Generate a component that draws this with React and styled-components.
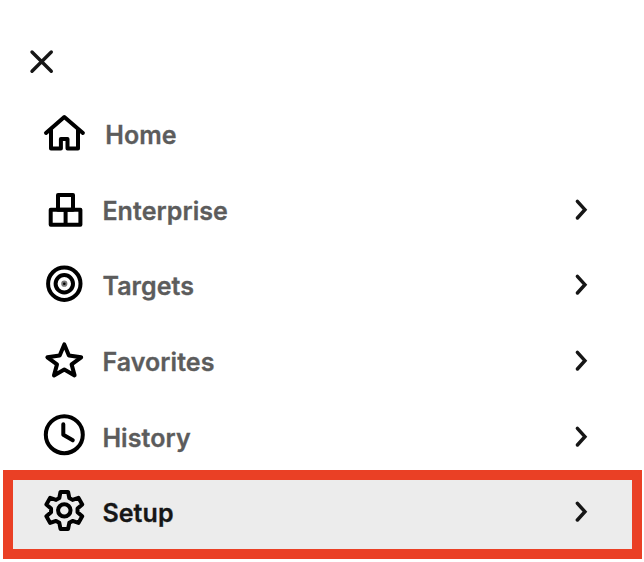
import React from "react";
import styled, { createGlobalStyle } from "styled-components";

const GlobalStyle = createGlobalStyle`
  * { box-sizing: border-box; }
  body { margin: 0; background: #fff; font-family: Inter, "Liberation Sans", sans-serif; }
`;

const Panel = styled.nav`
  width: 644px;
  height: 562px;
  background: #fff;
  overflow: hidden;
`;

const Header = styled.header`
  height: 97px;
  padding: 46px 0 0 26px;
`;

const CloseButton = styled.button`
  display: block;
  width: 32px;
  height: 32px;
  padding: 0;
  border: 0;
  background: none;
`;

const Menu = styled.ul`
  margin: 0;
  padding: 0;
  list-style: none;
`;

const Item = styled.li`
  display: flex;
  align-items: flex-start;
  height: ${(p) => p.$height}px;
  padding: 13px 50px 0 40px;
  color: #5c5c5c;
`;

const ActiveItem = styled(Item)`
  width: 639px;
  margin-left: 3px;
  padding: 8px 38px 0 27px;
  border: 10px solid #ea4025;
  background: #ececec;
  color: #161616;
`;

const Label = styled.span`
  flex: 1;
  margin: 9px 0 0 ${(p) => p.$gap}px;
  font-size: 25px;
  font-weight: 600;
  line-height: 32px;
  letter-spacing: 0.08px;
  -webkit-text-stroke: 0.3px currentColor;
  -webkit-font-smoothing: antialiased;
`;

const Icon = styled.svg`
  display: block;
  flex: none;
  fill: none;
  stroke: #000;
  stroke-width: 4;
  stroke-linecap: round;
  stroke-linejoin: round;
`;

const ChevronIcon = styled(Icon)`
  margin-top: 12px;
  stroke: #161616;
  stroke-width: 3.5;
  stroke-linejoin: miter;
`;

const CloseIcon = styled(Icon)`
  stroke: #161616;
  stroke-width: 3.4;
`;

const gearPoints = Array.from({ length: 6 }, (_, i) => {
  const a = (i * Math.PI) / 3;
  return [[-5, -12.4], [-3.8, -18.5], [3.8, -18.5], [5, -12.4]]
    .map(([x, y]) => `${(x * Math.cos(a) - y * Math.sin(a)).toFixed(2)},${(x * Math.sin(a) + y * Math.cos(a)).toFixed(2)}`)
    .join(" ");
}).join(" ");

const drawings = {
  home: (
    <>
      <path d="M6 23 24.3 7 42.9 23" />
      <path d="M11 20V38.5H20.9V29H27.5V38.5H38V20" />
    </>
  ),
  enterprise: (
    <>
      <rect x="18" y="8.9" width="15" height="14.9" />
      <path d="M10.7 23.8H40.4V38.8H10.7ZM25.6 23.8V38.8" />
    </>
  ),
  targets: (
    <>
      <circle cx="24.3" cy="22.7" r="16.2" />
      <circle cx="24.3" cy="22.7" r="8.7" />
      <circle cx="24.3" cy="22.7" r="2.2" stroke="#777" strokeWidth="1.8" fill="#000" />
    </>
  ),
  favorites: (
    <path d="M24.3 7.4 28.9 18.6 41.2 20.3 31.6 27.4 34.6 38.4 24.3 32.4 14 38.4 17 27.4 7.4 20.3 19.7 18.6Z" />
  ),
  history: (
    <>
      <circle cx="24.3" cy="21.7" r="18.5" />
      <path d="M23.3 11.3V21.7L32.8 27.3" />
    </>
  ),
  setup: (
    <g transform="translate(24.3 22.4)">
      <polygon points={gearPoints} />
      <circle r="6.2" />
    </g>
  ),
};

const items = [
  { id: "home", text: "Home", height: 76, gap: 17.2 },
  { id: "enterprise", text: "Enterprise", height: 75, gap: 14.4, more: true },
  { id: "targets", text: "Targets", height: 76, gap: 14.4, more: true },
  { id: "favorites", text: "Favorites", height: 76, gap: 14.4, more: true },
  { id: "history", text: "History", height: 70, gap: 14.4, more: true },
  { id: "setup", text: "Setup", height: 89, gap: 14.4, more: true, active: true },
];

export default function App() {
  return (
    <>
      <GlobalStyle />
      <Panel>
        <Header>
          <CloseButton aria-label="Close">
            <CloseIcon width="32" height="32" viewBox="0 0 32 32">
              <path d="M6 6 25.3 25.3M25.3 6 6 25.3" />
            </CloseIcon>
          </CloseButton>
        </Header>
        <Menu>
          {items.map(({ id, text, height, gap, more, active }) => {
            const Row = active ? ActiveItem : Item;
            return (
              <Row key={id} $height={height}>
                <Icon width="48" height="48" viewBox="0 0 48 48">{drawings[id]}</Icon>
                <Label $gap={gap}>{text}</Label>
                {more && (
                  <ChevronIcon width="24" height="24" viewBox="0 0 24 24">
                    <path d="M7.4 3.4 14.9 11.7 7.4 20" />
                  </ChevronIcon>
                )}
              </Row>
            );
          })}
        </Menu>
      </Panel>
    </>
  );
}
